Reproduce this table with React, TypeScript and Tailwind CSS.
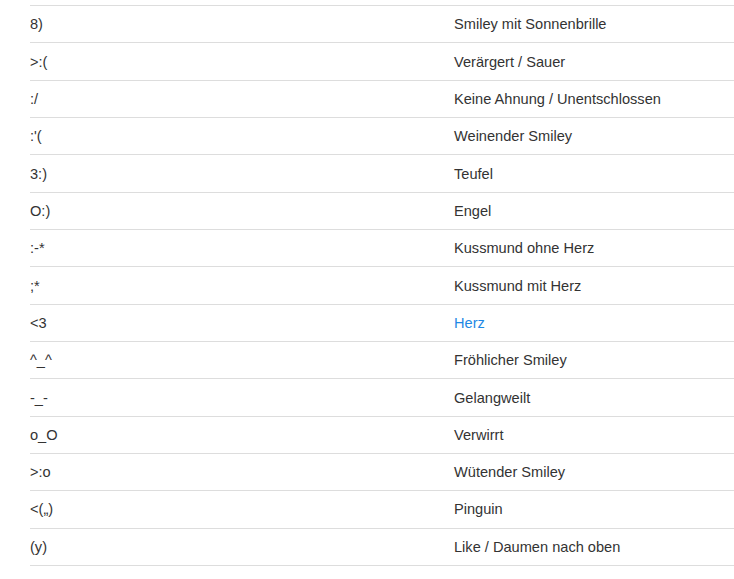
const rows: {code: string; label: string; link?: boolean}[] = [
  {code: "8)", label: "Smiley mit Sonnenbrille"},
  {code: ">:(", label: "Verärgert / Sauer"},
  {code: ":/", label: "Keine Ahnung / Unentschlossen"},
  {code: ":'(", label: "Weinender Smiley"},
  {code: "3:)", label: "Teufel"},
  {code: "O:)", label: "Engel"},
  {code: ":-*", label: "Kussmund ohne Herz"},
  {code: ";*", label: "Kussmund mit Herz"},
  {code: "<3", label: "Herz", link: true},
  {code: "^_^", label: "Fröhlicher Smiley"},
  {code: "-_-", label: "Gelangweilt"},
  {code: "o_O", label: "Verwirrt"},
  {code: ">:o", label: "Wütender Smiley"},
  {code: "<(„)", label: "Pinguin"},
  {code: "(y)", label: "Like / Daumen nach oben"},
];

export default function App() {
  return (
    <div className="min-h-[579px] bg-white pl-[30px] pt-[5px] font-['Liberation_Sans',Arial,sans-serif] text-[14.6px] text-[#333]">
      <div className="border-b border-[#ddd]">
        {rows.map((r) => (
          <div key={r.code} className="flex h-[37.33px] items-center border-t border-[#ddd] pt-[2px]">
            <div className="w-[424px] shrink-0 whitespace-pre">{r.code}</div>
            <div className="flex-1">
              {r.link ? (
                <a href="#" className="text-[#1e88e5]">
                  {r.label}
                </a>
              ) : (
                r.label
              )}
            </div>
          </div>
        ))}
      </div>
    </div>
  );
}
